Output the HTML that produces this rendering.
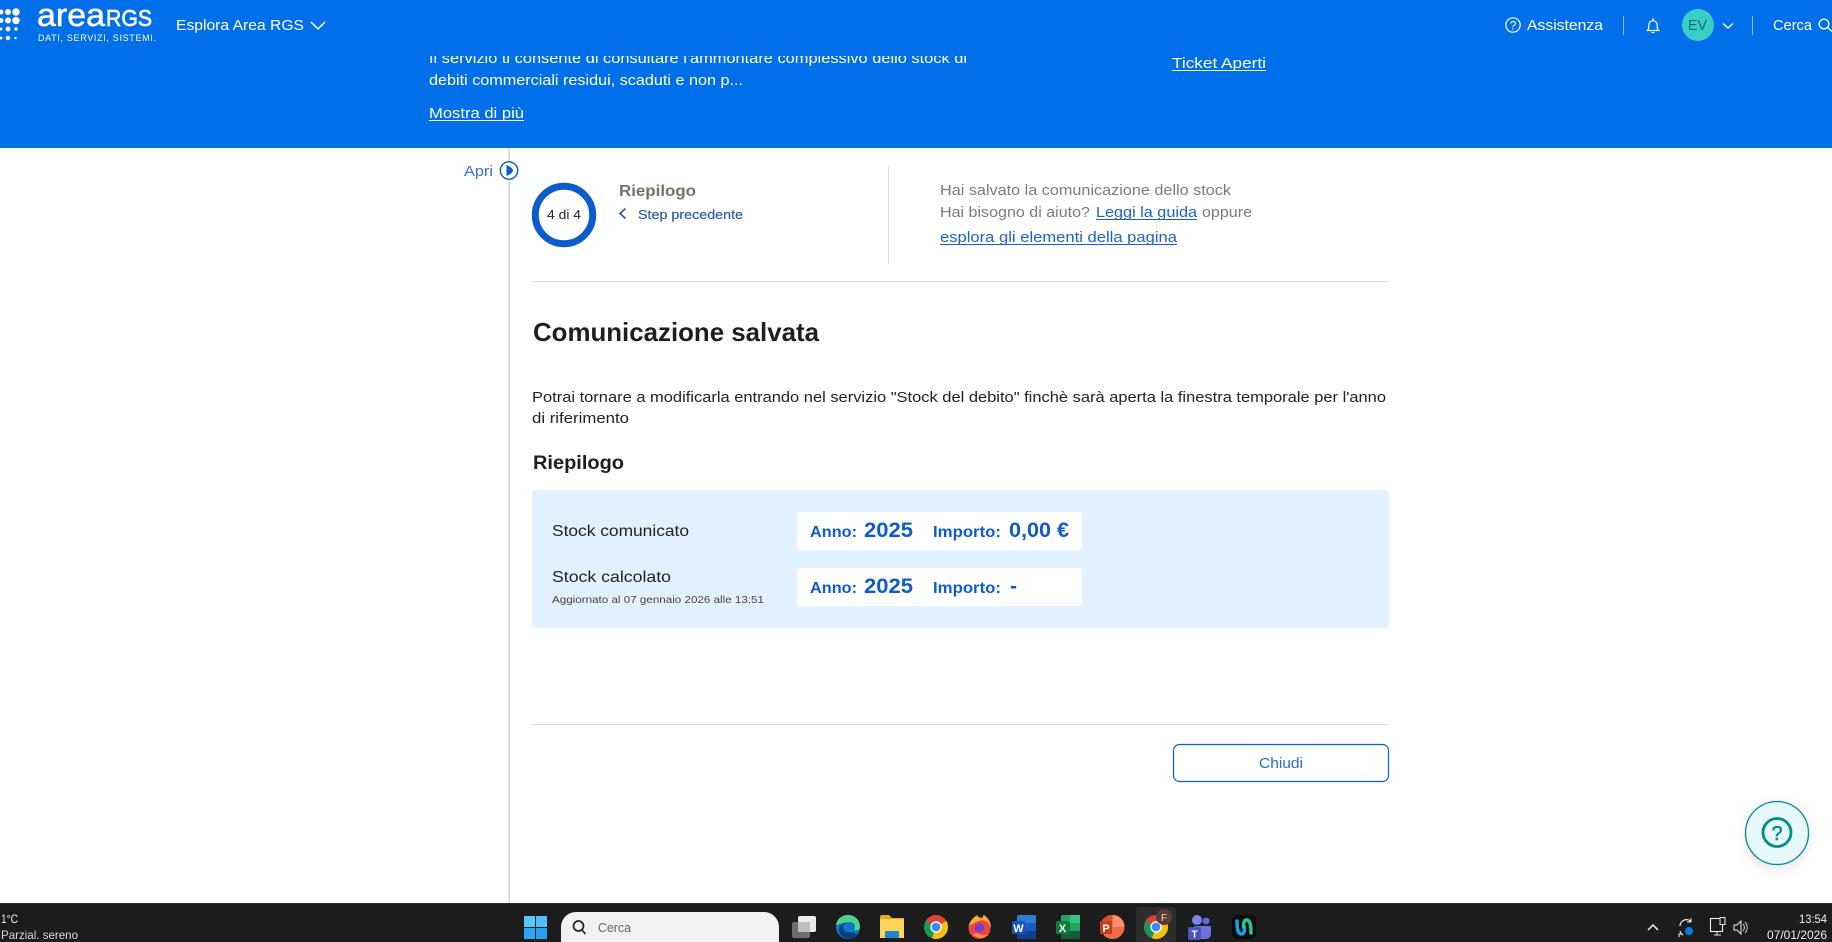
<!DOCTYPE html>
<html lang="it"><head><meta charset="utf-8"><title>Comunicazione salvata</title>
<style>
html,body{margin:0;padding:0;width:1832px;height:942px;overflow:hidden;background:#fff}
svg{display:block}
text{font-family:"Liberation Sans",sans-serif;white-space:pre}
</style></head><body>
<svg width="1832" height="942" viewBox="0 0 1832 942" xmlns="http://www.w3.org/2000/svg">
<defs><filter id="sh" x="-50%" y="-50%" width="200%" height="200%"><feDropShadow dx="0" dy="4" stdDeviation="6" flood-color="#000" flood-opacity=".1"/></filter></defs>
<rect width="1832" height="942" fill="#fff"/>

<!-- blue header -->
<rect width="1832" height="148" fill="#006fe9"/>
<g fill="#fff" font-size="15">
<text x="429" y="63" textLength="538" lengthAdjust="spacingAndGlyphs">Il servizio ti consente di consultare l'ammontare complessivo dello stock di</text>
<text x="429" y="85" textLength="314" lengthAdjust="spacingAndGlyphs">debiti commerciali residui, scaduti e non p...</text>
<text x="429" y="118" textLength="95" lengthAdjust="spacingAndGlyphs">Mostra di più</text>
<text x="1172" y="68" textLength="94" lengthAdjust="spacingAndGlyphs">Ticket Aperti</text>
</g>
<rect x="429" y="120" width="95" height="1" fill="#fff"/>
<rect x="1172" y="70" width="94" height="1" fill="#fff"/>
<rect width="1832" height="56" fill="#006fe9"/>

<!-- logo -->
<g fill="#fff">
<circle cx="1" cy="12" r="2.5"/><circle cx="8" cy="12" r="3"/><circle cx="16" cy="12" r="3.7"/>
<circle cx="1" cy="20.500" r="2.5"/><circle cx="8" cy="20.500" r="3"/><circle cx="16" cy="20.500" r="3.7"/>
<circle cx="1" cy="29" r="1.5"/><circle cx="8" cy="29" r="2.5"/><circle cx="16" cy="29" r="1.800"/>
<circle cx="1" cy="38" r="1.500"/><circle cx="8" cy="38" r="2.200"/><circle cx="15.500" cy="38" r="1.200"/>
<text x="37" y="26" font-size="32" stroke="#fff" stroke-width=".5" textLength="68" lengthAdjust="spacingAndGlyphs">area</text>
<text x="106" y="26" font-size="23.500" stroke="#fff" stroke-width=".7" textLength="46" lengthAdjust="spacingAndGlyphs">RGS</text>
<text x="38" y="41" font-size="9" textLength="118" lengthAdjust="spacing">DATI, SERVIZI, SISTEMI.</text>
<text x="176" y="30" font-size="15" textLength="128" lengthAdjust="spacingAndGlyphs">Esplora Area RGS</text>
</g>
<path d="M311 22l7 7 7-7" fill="none" stroke="#fff" stroke-width="1.500"/>

<!-- header right -->
<circle cx="1513" cy="25" r="7.200" fill="none" stroke="#fff" stroke-width="1.200"/>
<text x="1513" y="29.500" font-size="12" fill="#fff" text-anchor="middle">?</text>
<text x="1527" y="30" font-size="15" fill="#fff" textLength="76" lengthAdjust="spacingAndGlyphs">Assistenza</text>
<rect x="1623" y="16" width="1" height="19" fill="#8cbdf4"/>
<path d="M1647.500 30.500c1.200-1.300 1.300-2.500 1.300-5 0-2.800 1.800-4.800 4.200-4.800s4.200 2 4.200 4.800c0 2.500.1 3.700 1.300 5z" fill="none" stroke="#fff" stroke-width="1.200"/>
<path d="M1653 18v2.500M1651.500 32.500h3" stroke="#fff" stroke-width="1.200" fill="none"/>
<circle cx="1698" cy="25" r="16" fill="#3acfc6"/>
<text x="1688" y="30" font-size="14.500" fill="#0f6d7a" textLength="19" lengthAdjust="spacingAndGlyphs">EV</text>
<path d="M1723 23.500l5 4.500 5-4.500" fill="none" stroke="#fff" stroke-width="1.300"/>
<rect x="1752" y="16" width="1" height="19" fill="#8cbdf4"/>
<text x="1773" y="30" font-size="15" fill="#fff" textLength="39" lengthAdjust="spacingAndGlyphs">Cerca</text>
<circle cx="1824" cy="24" r="4.800" fill="none" stroke="#fff" stroke-width="1.300"/>
<path d="M1827.500 27.500l4.500 4" stroke="#fff" stroke-width="1.300"/>

<!-- sidebar -->
<rect x="508.500" y="148" width="1.500" height="755" fill="#d4d4d4"/>
<text x="464" y="176" font-size="15" fill="#3c6fd0" textLength="29" lengthAdjust="spacingAndGlyphs">Apri</text>
<circle cx="509" cy="170.500" r="8.700" fill="#fff" stroke="#0d5ccb" stroke-width="1.400"/>
<path d="M506.500 165c3 1 6.500 3.500 6.500 5.500s-3.500 4.500-6.500 5.500z" fill="#0d5ccb"/>

<!-- step -->
<circle cx="564" cy="215" r="28.700" fill="none" stroke="#0d5ccb" stroke-width="7"/>
<text x="547" y="219" font-size="13" fill="#222" textLength="34" lengthAdjust="spacingAndGlyphs">4 di 4</text>
<text x="619" y="196" font-size="16" font-weight="700" fill="#77716b" textLength="77" lengthAdjust="spacingAndGlyphs">Riepilogo</text>
<path d="M625.500 208.500l-5.500 5 5.500 5" fill="none" stroke="#1e5bb5" stroke-width="1.700"/>
<text x="638" y="219" font-size="13" fill="#2d5da5" stroke="#2d5da5" stroke-width=".2" textLength="105" lengthAdjust="spacingAndGlyphs">Step precedente</text>
<rect x="888" y="166" width="1" height="98" fill="#dcdcdc"/>
<g font-size="14.500" fill="#7d7a77">
<text x="940" y="195" textLength="291" lengthAdjust="spacingAndGlyphs">Hai salvato la comunicazione dello stock</text>
<text x="940" y="217" textLength="150" lengthAdjust="spacingAndGlyphs">Hai bisogno di aiuto?</text>
<text x="1202" y="217" textLength="50" lengthAdjust="spacingAndGlyphs">oppure</text>
</g>
<g font-size="14.500" fill="#1c62d2">
<text x="1096" y="217" textLength="101" lengthAdjust="spacingAndGlyphs">Leggi la guida</text>
<text x="940" y="242" textLength="237" lengthAdjust="spacingAndGlyphs">esplora gli elementi della pagina</text>
</g>
<rect x="1096" y="219" width="101" height="1" fill="#1c62d2"/>
<rect x="940" y="244" width="237" height="1" fill="#1c62d2"/>
<rect x="532" y="281" width="857" height="1" fill="#dfdfdf"/>

<!-- content -->
<text x="533" y="341" font-size="26" font-weight="700" fill="#1e1e1e" textLength="286" lengthAdjust="spacingAndGlyphs">Comunicazione salvata</text>
<g font-size="14.500" fill="#222">
<text x="532" y="402" textLength="854" lengthAdjust="spacingAndGlyphs">Potrai tornare a modificarla entrando nel servizio "Stock del debito" finchè sarà aperta la finestra temporale per l'anno</text>
<text x="532" y="423" textLength="97" lengthAdjust="spacingAndGlyphs">di riferimento</text>
</g>
<text x="533" y="469" font-size="19" font-weight="700" fill="#1e1e1e" textLength="91" lengthAdjust="spacingAndGlyphs">Riepilogo</text>

<rect x="532" y="490" width="857" height="138" rx="3" fill="#e1f1ff"/>
<rect x="797" y="512" width="285" height="38" rx="3" fill="#fff"/>
<rect x="797" y="568" width="285" height="38" rx="3" fill="#fff"/>
<g font-size="16" fill="#222">
<text x="552" y="536" textLength="137" lengthAdjust="spacingAndGlyphs">Stock comunicato</text>
<text x="552" y="582" textLength="119" lengthAdjust="spacingAndGlyphs">Stock calcolato</text>
</g>
<text x="552" y="603" font-size="10.500" fill="#444" textLength="212" lengthAdjust="spacingAndGlyphs">Aggiornato al 07 gennaio 2026 alle 13:51</text>
<g fill="#0d5ccb" font-weight="700" font-size="16">
<text x="810" y="537" textLength="47" lengthAdjust="spacingAndGlyphs">Anno:</text>
<text x="864" y="537" font-size="21" textLength="49" lengthAdjust="spacingAndGlyphs">2025</text>
<text x="933" y="537" textLength="68" lengthAdjust="spacingAndGlyphs">Importo:</text>
<text x="1009" y="537" font-size="21" textLength="60" lengthAdjust="spacingAndGlyphs">0,00 €</text>
<text x="810" y="593" textLength="47" lengthAdjust="spacingAndGlyphs">Anno:</text>
<text x="864" y="593" font-size="21" textLength="49" lengthAdjust="spacingAndGlyphs">2025</text>
<text x="933" y="593" textLength="68" lengthAdjust="spacingAndGlyphs">Importo:</text>
<text x="1010" y="593" font-size="21" textLength="7" lengthAdjust="spacingAndGlyphs">-</text>
</g>

<rect x="532" y="724" width="857" height="1" fill="#dcdcdc"/>
<rect x="1173.500" y="744.500" width="215" height="37" rx="6" fill="#fff" stroke="#0d5ccb" stroke-width="1.200"/>
<text x="1259" y="768" font-size="15" fill="#2f6bd0" textLength="44" lengthAdjust="spacingAndGlyphs">Chiudi</text>

<!-- help -->
<circle cx="1777" cy="833" r="31.500" fill="#e6f8f8" stroke="#008e88" stroke-width="1.300" filter="url(#sh)"/>
<circle cx="1777" cy="832.500" r="14" fill="none" stroke="#008e88" stroke-width="2.800"/>
<text x="1777" y="840" font-size="20" fill="#008e88" stroke="#008e88" stroke-width=".5" text-anchor="middle">?</text>

<!-- taskbar -->
<rect y="903" width="1832" height="39" fill="#1c1c1c"/>
<rect y="903" width="1832" height="1" fill="#2e2e2e"/>
<text x="1" y="923" font-size="12" fill="#f0f0f0" textLength="17" lengthAdjust="spacingAndGlyphs">1°C</text>
<text x="1" y="939" font-size="12" fill="#d8d8d8" textLength="77" lengthAdjust="spacingAndGlyphs">Parzial. sereno</text>
<rect x="524" y="916" width="11" height="11" fill="#52c8fb"/><rect x="536" y="916" width="11" height="11" fill="#4cc0f8"/><rect x="524" y="928" width="11" height="11" fill="#2ea6ee"/><rect x="536" y="928" width="11" height="11" fill="#25a0ec"/>
<rect x="561" y="912" width="218" height="60" rx="15" fill="#f1f1f1"/>
<circle cx="578.500" cy="926" r="5" fill="none" stroke="#222" stroke-width="1.700"/><path d="M582 930l3.500 4" stroke="#222" stroke-width="1.700"/>
<text x="598" y="932" font-size="13" fill="#666" textLength="33" lengthAdjust="spacingAndGlyphs">Cerca</text>

<!-- task view -->
<rect x="792" y="922" width="18" height="16" rx="2" fill="#6d6d6d"/>
<rect x="798" y="916" width="18" height="16" rx="2" fill="#ececec"/>
<rect x="798" y="922" width="12" height="10" fill="#bdbdbd"/>
<!-- edge -->
<circle cx="848" cy="927" r="12" fill="#0f78c9"/>
<path d="M836 925c1-7 7-10 12-10 7 0 12 5 12 12 0 3-3 4-6 3 3-5-1-8-5-8-5 0-8 2-13 3z" fill="#4fd28a"/>
<path d="M852 932c-5 1-9-1-9-5 0-2 2-4 4-4-3-1-8 1-8 7 0 6 6 9 11 9 3 0 6-2 8-4-2-1-4-2-6-3z" fill="#0a3f86"/>
<!-- folder -->
<path d="M880 917a2 2 0 0 1 2-2h7l3 3h12v20h-24z" fill="#e4a91f"/>
<rect x="880" y="919" width="24" height="19" rx="1" fill="#fbd458"/>
<rect x="885" y="931" width="14" height="7" rx="1" fill="#1d85d2"/>
<!-- chrome -->
<circle cx="936" cy="927" r="12" fill="#db4437"/><path d="M936 927l-10.400-6-1.600 6a12 12 0 0 0 8 11.300z" fill="#0f9d58"/><path d="M936 927l-4 11.300a12 12 0 0 0 16-11.300 12 12 0 0 0-1.600-6z" fill="#f4c20d"/><circle cx="936" cy="927" r="5.700" fill="#fff"/><circle cx="936" cy="927" r="4.400" fill="#4285f4"/>
<!-- firefox -->
<circle cx="979.500" cy="928" r="11" fill="#f0433e"/>
<path d="M969 926c1-6 6-10 9-11-1 3 3 4 5 3 0-1 0-3 1-3 4 3 7 7 7 13-2-7-8-9-12-7-4 1-7 3-10 5z" fill="#fdb12e"/>
<path d="M973 934c4 5 12 5 16 0-2 2-9 2-11-1z" fill="#ff9640"/>
<circle cx="979.500" cy="928" r="4.800" fill="#7b3fc6"/>
<!-- word -->
<rect x="1017" y="915" width="19" height="24" rx="1.500" fill="#2b7cd3"/><rect x="1017" y="923" width="19" height="8" fill="#185abd"/><rect x="1017" y="931" width="19" height="8" fill="#103f91"/>
<rect x="1012" y="921" width="13" height="13" rx="1" fill="#1555b5"/>
<text x="1018.500" y="932" font-size="11" font-weight="700" fill="#fff" text-anchor="middle">W</text>
<!-- excel -->
<rect x="1061" y="915" width="19" height="24" rx="1.500" fill="#21a366"/><rect x="1070" y="915" width="10" height="8" fill="#33c481"/><rect x="1061" y="931" width="19" height="8" fill="#185c37"/><rect x="1061" y="923" width="9" height="8" fill="#107c41"/>
<rect x="1056" y="921" width="13" height="13" rx="1" fill="#107c41"/>
<text x="1062.500" y="932" font-size="11" font-weight="700" fill="#fff" text-anchor="middle">X</text>
<!-- powerpoint -->
<circle cx="1112.500" cy="927" r="12" fill="#ed6c47"/><path d="M1112.500 915a12 12 0 0 1 12 12h-12z" fill="#ff8f6b"/><path d="M1105 917a12 12 0 0 1 7.500-2v12h-12a12 12 0 0 1 4.500-10z" fill="#d35230"/>
<rect x="1100" y="921" width="12" height="13" rx="1" fill="#c43e1c"/>
<text x="1106" y="932" font-size="11" font-weight="700" fill="#fff" text-anchor="middle">P</text>
<!-- active chrome -->
<rect x="1136" y="907" width="40" height="35" rx="3" fill="#2d2d2d"/>
<g transform="translate(220 0)"><circle cx="936" cy="927" r="12" fill="#db4437"/><path d="M936 927l-10.400-6-1.600 6a12 12 0 0 0 8 11.300z" fill="#0f9d58"/><path d="M936 927l-4 11.300a12 12 0 0 0 16-11.300 12 12 0 0 0-1.600-6z" fill="#f4c20d"/><circle cx="936" cy="927" r="5.700" fill="#fff"/><circle cx="936" cy="927" r="4.400" fill="#4285f4"/></g>
<circle cx="1164" cy="917" r="8" fill="#5a3b33"/>
<text x="1164" y="921" font-size="10" fill="#e8dcd8" text-anchor="middle">F</text>
<!-- teams -->
<circle cx="1197" cy="920" r="5" fill="#7b83eb"/><circle cx="1206" cy="921" r="3.500" fill="#5f68d6"/>
<path d="M1194 926h17v8a5 5 0 0 1-5 5h-7a5 5 0 0 1-5-5z" fill="#6a72df"/>
<rect x="1188" y="927" width="13" height="13" rx="2" fill="#4b53bc"/>
<text x="1194.500" y="937.500" font-size="10" font-weight="700" fill="#fff" text-anchor="middle">T</text>
<!-- webex -->
<rect x="1232" y="915" width="24" height="24" rx="5" fill="#0a0a0a"/>
<path d="M1237 921c0 9 1 13 4.500 13 3 0 3-4 3-7" fill="none" stroke="#0ea5e9" stroke-width="3.400" stroke-linecap="round"/>
<path d="M1251 933c0-9-1-13-4.500-13-3 0-3 4-3 7" fill="none" stroke="#26c88f" stroke-width="3.400" stroke-linecap="round"/>

<!-- tray -->
<path d="M1648 930l5-5 5 5" fill="none" stroke="#eee" stroke-width="1.500"/>
<path d="M1680 926a6.500 6.500 0 0 1 11-4.500M1683 935a6.500 6.500 0 0 1-3-4" fill="none" stroke="#eee" stroke-width="1.200"/>
<path d="M1691 918v4h-4M1679 937v-3h3" fill="none" stroke="#eee" stroke-width="1"/>
<circle cx="1689" cy="931" r="4" fill="#0f7adf"/>
<rect x="1710.500" y="918.500" width="12" height="13" fill="none" stroke="#eee" stroke-width="1.100"/>
<rect x="1720" y="917.500" width="5" height="7" fill="#1c1c1c" stroke="#eee" stroke-width="1"/>
<path d="M1714 935h7M1717 932v3" stroke="#eee" stroke-width="1"/>
<path d="M1734 925h3l4-4v13l-4-4h-3z" fill="none" stroke="#eee" stroke-width="1"/>
<path d="M1743 924a5 5 0 0 1 0 7M1745 922a8 8 0 0 1 0 11" fill="none" stroke="#ccc" stroke-width="1"/>
<text x="1799" y="923" font-size="12" fill="#eee" textLength="28" lengthAdjust="spacingAndGlyphs">13:54</text>
<text x="1767" y="939" font-size="12" fill="#eee" textLength="60" lengthAdjust="spacingAndGlyphs">07/01/2026</text>
</svg>
</body></html>
